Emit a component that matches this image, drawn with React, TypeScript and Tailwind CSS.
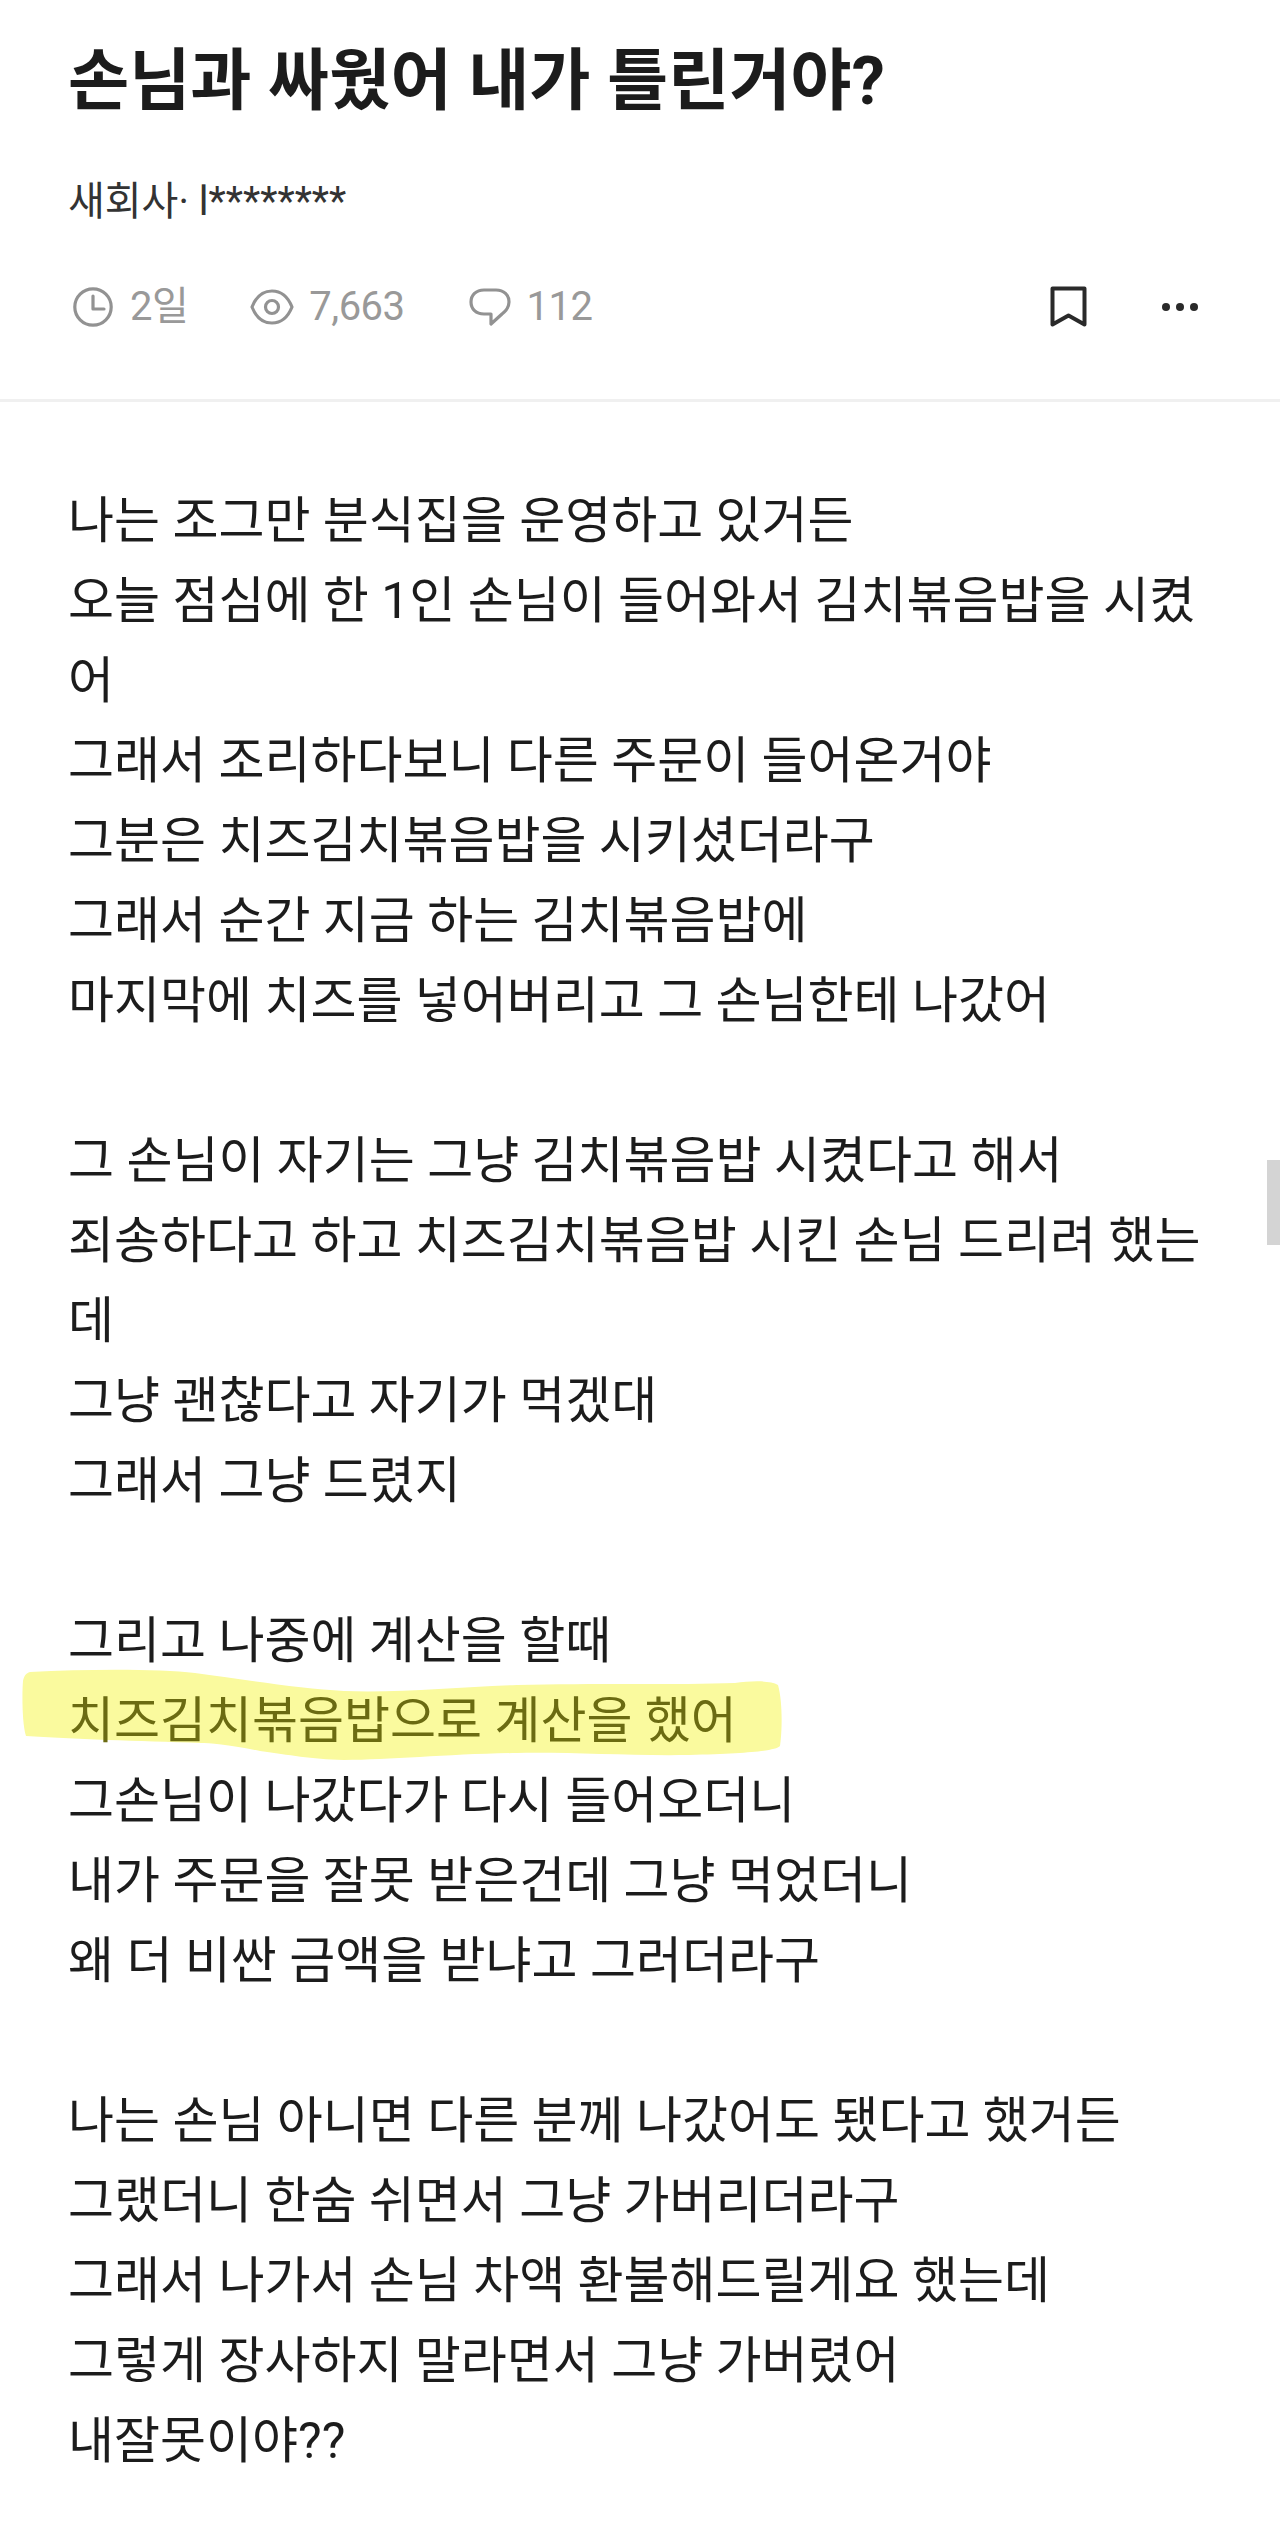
const font = "font-['Roboto','Noto_Sans_CJK_KR',sans-serif]";

// null = blank line between paragraphs
const lines: (string | null)[] = [
  '나는 조그만 분식집을 운영하고 있거든',
  '오늘 점심에 한 1인 손님이 들어와서 김치볶음밥을 시켰',
  '어',
  '그래서 조리하다보니 다른 주문이 들어온거야',
  '그분은 치즈김치볶음밥을 시키셨더라구',
  '그래서 순간 지금 하는 김치볶음밥에',
  '마지막에 치즈를 넣어버리고 그 손님한테 나갔어',
  null,
  '그 손님이 자기는 그냥 김치볶음밥 시켰다고 해서',
  '죄송하다고 하고 치즈김치볶음밥 시킨 손님 드리려 했는',
  '데',
  '그냥 괜찮다고 자기가 먹겠대',
  '그래서 그냥 드렸지',
  null,
  '그리고 나중에 계산을 할때',
  '치즈김치볶음밥으로 계산을 했어',
  '그손님이 나갔다가 다시 들어오더니',
  '내가 주문을 잘못 받은건데 그냥 먹었더니',
  '왜 더 비싼 금액을 받냐고 그러더라구',
  null,
  '나는 손님 아니면 다른 분께 나갔어도 됐다고 했거든',
  '그랬더니 한숨 쉬면서 그냥 가버리더라구',
  '그래서 나가서 손님 차액 환불해드릴게요 했는데',
  '그렇게 장사하지 말라면서 그냥 가버렸어',
  '내잘못이야??',
];

function ClockIcon() {
  return (
    <svg width="40" height="40" viewBox="0 0 40 40" fill="none" stroke="#929292" strokeWidth="3.2" strokeLinecap="round" strokeLinejoin="round">
      <circle cx="20" cy="20" r="18.2" />
      <path d="M20 9v13h11" />
    </svg>
  );
}

function EyeIcon() {
  return (
    <svg width="44" height="36" viewBox="0 0 44 36" fill="none" stroke="#929292" strokeWidth="3.2" strokeLinecap="round" strokeLinejoin="round">
      <path d="M2 18C6 8 13 2 22 2s16 6 20 16c-4 10-11 16-20 16S6 28 2 18z" />
      <circle cx="22" cy="18" r="6.5" />
    </svg>
  );
}

function CommentIcon() {
  return (
    <svg width="42" height="40" viewBox="0 0 42 40" fill="none" stroke="#929292" strokeWidth="3.2" strokeLinecap="round" strokeLinejoin="round">
      <path d="M15 3h12c8 0 13 5 13 12 0 6-3 9-7 12L22 37V27h-7C7 27 2 22 2 15S7 3 15 3z" />
    </svg>
  );
}

function BookmarkIcon() {
  return (
    <svg width="37" height="42" viewBox="0 0 37 42" fill="none" stroke="#2a2a2a" strokeWidth="4" strokeLinejoin="round">
      <path d="M2.5 2.5h32v36l-16-9-16 9z" />
    </svg>
  );
}

function MoreIcon() {
  return (
    <svg width="40" height="10" viewBox="0 0 40 10" fill="#2a2a2a">
      <circle cx="6" cy="5" r="4" />
      <circle cx="20" cy="5" r="4" />
      <circle cx="34" cy="5" r="4" />
    </svg>
  );
}

export default function App() {
  return (
    <div className={`relative w-[1280px] h-[2540px] overflow-hidden bg-white ${font}`}>
      {/* Header */}
      <div className="px-[68px] pt-[39px] border-b-[3px] border-[#f0f0f0] h-[402px]">
        <h1 className="text-[66.5px] leading-[84px] font-bold text-[#1c1c1c] whitespace-nowrap">
          손님과 싸웠어 내가 틀린거야?
        </h1>
        <p className="mt-[54px] text-[40px] leading-[50px] text-[#333] whitespace-nowrap">새회사· l********</p>
        <div className="mt-[55px] flex items-center h-[50px] text-[40px] leading-[50px] tracking-[-0.5px] text-[#999]">
          <span className="ml-[5px]"><ClockIcon /></span>
          <span className="ml-[17px]">2일</span>
          <span className="ml-[62px]"><EyeIcon /></span>
          <span className="ml-[15px]">7,663</span>
          <span className="ml-[64px]"><CommentIcon /></span>
          <span className="ml-[16px]">112</span>
          <span className="ml-auto"><BookmarkIcon /></span>
          <span className="ml-[73px] mr-[12px]"><MoreIcon /></span>
        </div>
      </div>

      {/* Body */}
      <div className="relative px-[68px] pt-[79px] text-[50px] leading-[80px] text-[#1c1c1c]">
        {lines.map((line, i) =>
          line === null ? (
            <div key={i} className="h-[80px]" />
          ) : line.startsWith('치즈김치볶음밥으로') ? (
            <div key={i} className="relative whitespace-nowrap text-[#6b6b12]">
              {/* highlighter stroke */}
              <svg className="absolute left-[-68px] top-[-18px]" width="800" height="110" viewBox="0 0 800 110" fill="#fafa9e">
                <path d="M30 9C90 6 160 6 195 10C240 16 300 26 344 28C400 30 460 24 517 22C590 20 680 22 735 20C750 18 770 17 778 22C783 40 782 70 780 83C775 88 750 90 689 92C630 93 570 89 517 90C450 91 390 97 344 97C310 96 290 92 260 88C230 82 210 80 200 80C140 78 70 76 26 73C22 60 22 30 23 18C24 13 26 10 30 9Z" />
              </svg>
              <span className="relative">{line}</span>
            </div>
          ) : (
            <div key={i} className="whitespace-nowrap">{line}</div>
          ),
        )}
      </div>

      {/* Scroll indicator */}
      <div className="absolute right-0 top-[1160px] w-[13px] h-[85px] bg-[#d4d4d4]" />
    </div>
  );
}
